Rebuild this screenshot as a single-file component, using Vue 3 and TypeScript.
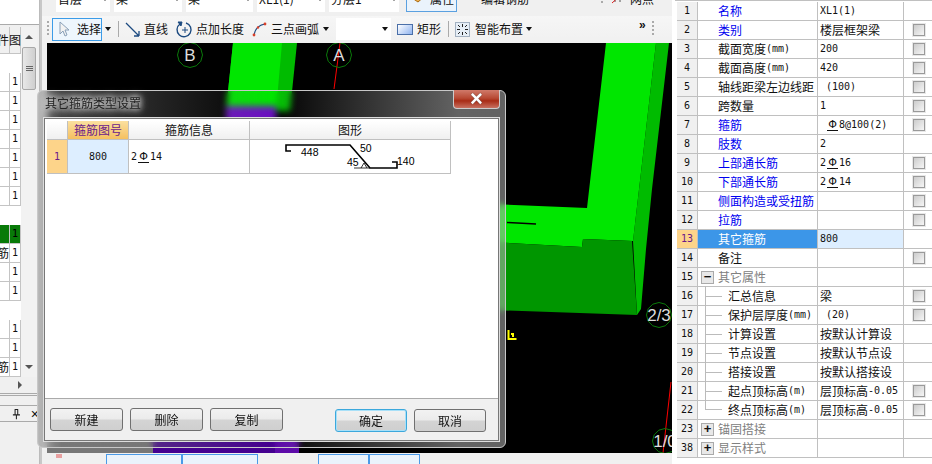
<template>
  <div class="app">
    <aside class="side">
      <div class="side__top" />
      <div class="side__grid">
        <div class="side__body">
          <div class="side__head">
            <span class="side__name">件</span>
            <span class="side__mark">图</span>
          </div>
          <div
            v-for="(row, i) in sideRows"
            :key="i"
            class="side__row"
            :class="{ 'side__row--blank': row.blank, 'side__row--on': row.on }"
          >
            <span class="side__name">{{ row.name }}</span>
            <span class="side__mark">{{ row.blank ? '' : '1' }}</span>
          </div>
        </div>
        <div class="vscroll">
          <span class="vscroll__up" />
          <span class="vscroll__thumb"><i /><i /><i /></span>
          <span class="vscroll__down" />
        </div>
      </div>
      <div class="side__hbar"><span class="side__right" /></div>
      <div class="side__pane">
        <svg width="10" height="12" viewBox="0 0 10 12"><path d="M3 1h4M3.5 1v6M6.5 1v6M1 7h8M5 7v5" fill="none" stroke="#222" stroke-width="1.2" /></svg>
        <span class="side__close">×</span>
      </div>
    </aside>

    <main class="mid">
      <div class="strip">
        <div v-for="c in combos" :key="c.text" class="combo" :style="{ width: c.width + 'px' }">
          <span>{{ c.text }}</span><b class="caret" />
        </div>
        <div class="prop-btn">
          <svg width="15" height="12" viewBox="0 0 15 12"><path d="M1 5 8 0l6 3-7 6z" fill="#f0b050" stroke="#a86a10" /></svg>
          <span>属性</span>
        </div>
        <div class="strip__item">
          <svg width="16" height="12" viewBox="0 0 16 12"><path d="M1 2h12M3 5h13" fill="none" stroke="#333" /></svg>
          <span>编辑钢筋</span>
        </div>
        <div class="strip__item strip__item--end">
          <i class="grip grip--short" />
          <svg width="16" height="12" viewBox="0 0 16 12"><path d="M0 2h15M0 6h15M5 0v9M10 0v9" fill="none" stroke="#555" /><path d="M2 10 13 0" stroke="#d22" /></svg>
          <span>网点</span>
        </div>
      </div>

      <div class="tools">
        <i class="grip" />
        <button type="button" class="tool-select">
          <svg width="13" height="17" viewBox="0 0 13 17"><path d="M2 1v12l3-3 2 5 2-1-2-5h4z" fill="#f2f2f2" stroke="#8aa0b8" /></svg>
          <span>选择</span>
        </button>
        <b class="caret caret--select" />
        <i class="sep" />
        <svg class="ico ico--line" width="15" height="15" viewBox="0 0 15 15"><path d="M1 1l13 13M14 14V9M14 14H9" fill="none" stroke="#1c4a80" stroke-width="1.3" /></svg>
        <span class="tool">直线</span>
        <svg class="ico ico--len" width="17" height="17" viewBox="0 0 17 17"><path d="M4 3A7 7 0 1 0 10 2" fill="none" stroke="#1c4a80" stroke-width="1.4" /><path d="M2 1l4 0-1 4zM6 9h6M9 6v6" fill="#1c4a80" stroke="#1c4a80" /></svg>
        <span class="tool">点加长度</span>
        <svg class="ico ico--arc" width="15" height="15" viewBox="0 0 15 15"><path d="M2 13C3 7 7 3 13 2" fill="none" stroke="#1c4a80" stroke-width="1.2" /><circle cx="2" cy="13" r="1.4" fill="#d8402a" /><circle cx="6" cy="5.5" r="1.2" fill="#d8402a" /><circle cx="13" cy="2" r="1.4" fill="#d8402a" /></svg>
        <span class="tool">三点画弧</span>
        <b class="caret caret--arc" />
        <div class="tool-combo"><b class="caret" /></div>
        <span class="rect-ico" />
        <span class="tool">矩形</span>
        <i class="sep sep--rect" />
        <svg class="ico ico--smart" width="15" height="15" viewBox="0 0 15 15"><rect x=".5" y=".5" width="14" height="14" fill="#e6eef6" stroke="#58708c" stroke-dasharray="1 1" /><path d="M7.5 2v3M7.5 10v3M2 7.5h3M10 7.5h3M3 3l2 2M12 3l-2 2M3 12l2-2M12 12l-2-2" stroke="#222" /></svg>
        <span class="tool">智能布置</span>
        <b class="caret caret--smart" />
        <span class="more">»</span>
        <i class="grip grip--end" />
      </div>

      <div class="canvas">
        <svg width="625" height="410" viewBox="47 44 625 410">
          <rect x="47" y="44" width="625" height="410" fill="#000" />
          <polygon points="233,44 297,44 290,112 226,112" fill="#00bb00" />
          <polygon points="233,44 282,44 276,112 226,112" fill="#00e600" />
          <rect x="226" y="107" width="50" height="18" fill="#6a10c0" />
          <rect x="47" y="428" width="106" height="26" fill="#777" />
          <rect x="153" y="428" width="122" height="26" fill="#44008f" />
          <rect x="275" y="428" width="24" height="26" fill="#5c0aa8" />
          <polygon points="656,44 669,44 652,190 646,250 641,310 637,316 633,242" fill="#00bb00" />
          <polygon points="606,44 656,44 633,242 583,240 582,248 490,243 490,205 587,209" fill="#00e600" />
          <polygon points="490,243 582,248 583,240 632,242 637,316 490,311" fill="#009600" />
          <path d="M507 223.5 536 225" stroke="#000" stroke-width="1.4" />
          <path d="M508.500 331v9h8M511 335h2v3" fill="none" stroke="#ff0" stroke-width="2" />
          <path d="M340 44 334 90M671 383 663 454" stroke="#f00" stroke-width="1" />
          <g v-for="a in axes" :key="a.text">
            <polygon :points="hex(a.x, a.y)" fill="none" stroke="#0a7a0a" />
            <text :x="a.x" :y="a.y + 6" class="axis" text-anchor="middle">{{ a.text }}</text>
          </g>
        </svg>
      </div>

      <div class="bottom">
        <span class="bottom__dot" />
        <span class="bottom__cell bottom__cell--a" />
        <span class="bottom__cell" />
        <span class="bottom__gap" />
        <span class="bottom__cell bottom__cell--b" />
        <span class="bottom__cell bottom__cell--c" />
      </div>
    </main>

    <section class="props">
      <div
        v-for="row in props"
        :key="row.no"
        class="prop"
        :class="{ 'prop--on': row.no === 13 }"
      >
        <span class="prop__no">{{ row.no }}</span>
        <span
          class="prop__label"
          :class="{ 'prop__label--blue': row.blue, 'prop__label--group': row.tree, 'prop__label--sub': row.sub, 'prop__label--last': row.no === 22 }"
        >
          <span v-if="row.tree" class="tree-btn">{{ row.tree }}</span>
          <Rich :text="row.label" />
        </span>
        <span class="prop__value"><Rich :text="row.value ?? ''" /></span>
        <span class="prop__check"><i v-if="row.check" class="box" /></span>
      </div>
    </section>

    <div class="dialog">
      <div class="dialog__title">
        <span>其它箍筋类型设置</span>
        <span class="dialog__close"><b>×</b></span>
      </div>
      <div class="dialog__inner">
        <div class="table">
          <div class="table__row table__row--head">
            <span class="cell cell--no" />
            <span class="cell cell--code cell--sel">箍筋图号</span>
            <span class="cell cell--info">箍筋信息</span>
            <span class="cell cell--shape">图形</span>
          </div>
          <div class="table__row table__row--data">
            <span class="cell cell--no cell--mark"><Rich text="1" /></span>
            <span class="cell cell--code cell--active"><Rich text="800" /></span>
            <span class="cell cell--info cell--left"><Rich text="2Φ14" /></span>
            <span class="cell cell--shape">
              <svg width="200" height="33" viewBox="250 140 200 33">
                <path d="M291 151h-5v-6h64l20 23h27v-6h-5" fill="none" stroke="#000" stroke-width="1.6" />
                <path d="M354 168h16M361 168l3-5 3 5" fill="none" stroke="#000" stroke-width=".8" />
                <text x="301" y="156" class="dim">448</text>
                <text x="360" y="152" class="dim">50</text>
                <text x="347" y="166" class="dim">45</text>
                <text x="397" y="165" class="dim">140</text>
              </svg>
            </span>
          </div>
        </div>
        <div class="dialog__foot">
          <button v-for="b in leftButtons" :key="b" type="button" class="btn">{{ b }}</button>
          <button type="button" class="btn btn--right btn--main">确定</button>
          <button type="button" class="btn btn--low">取消</button>
        </div>
      </div>
    </div>
  </div>
</template>

<script setup lang="ts">
import { h } from 'vue'

interface PropRow {
  no: number
  label: string
  value?: string
  blue?: boolean
  check?: boolean
  sub?: boolean
  tree?: string
}

// latin runs are half width in the original, so they get their own font size
const Rich = (p: { text: string }) =>
  (p.text.match(/[\x20-\x7e]+|Φ|[^\x20-\x7eΦ]+/g) ?? []).map((part) =>
    h('span', { class: part === 'Φ' ? 'steel' : /^[\x20-\x7e]/.test(part) ? 'latin' : 'cjk' }, part),
  )
Rich.props = ['text']

const combos = [
  { text: '首层', width: 54 },
  { text: '梁', width: 68 },
  { text: '梁', width: 67 },
  { text: 'XL1(1)', width: 68 },
  { text: '分层1', width: 70 },
]

const leftButtons = ['新建', '删除', '复制']

const blank = { name: '', blank: true }
const plain = { name: '' }
const sideRows: { name: string; blank?: boolean; on?: boolean }[] = [
  blank,
  ...Array(7).fill(plain),
  blank,
  { name: '', on: true },
  { name: '筋' },
  plain,
  plain,
  blank,
  plain,
  plain,
  { name: '筋' },
]

const axes = [
  { text: 'B', x: 190, y: 56 },
  { text: 'A', x: 339, y: 56 },
  { text: '2/3', x: 659, y: 316 },
  { text: '1/0', x: 665, y: 442 },
]

function hex(x: number, y: number) {
  return Array.from({ length: 12 }, (_, i) => {
    const a = (i * Math.PI) / 6
    return `${x + 12.5 * Math.cos(a)},${y + 12.5 * Math.sin(a)}`
  }).join(' ')
}

const props: PropRow[] = [
  { no: 1, label: '名称', value: 'XL1(1)', blue: true },
  { no: 2, label: '类别', value: '楼层框架梁', blue: true, check: true },
  { no: 3, label: '截面宽度(mm)', value: '200', check: true },
  { no: 4, label: '截面高度(mm)', value: '420', check: true },
  { no: 5, label: '轴线距梁左边线距', value: ' (100)', check: true },
  { no: 6, label: '跨数量', value: '1', check: true },
  { no: 7, label: '箍筋', value: ' Φ8@100(2)', blue: true, check: true },
  { no: 8, label: '肢数', value: '2', blue: true },
  { no: 9, label: '上部通长筋', value: '2Φ16', blue: true, check: true },
  { no: 10, label: '下部通长筋', value: '2Φ14', blue: true, check: true },
  { no: 11, label: '侧面构造或受扭筋', blue: true, check: true },
  { no: 12, label: '拉筋', blue: true, check: true },
  { no: 13, label: '其它箍筋', value: '800' },
  { no: 14, label: '备注', check: true },
  { no: 15, label: '其它属性', tree: '−' },
  { no: 16, label: '汇总信息', value: '梁', sub: true, check: true },
  { no: 17, label: '保护层厚度(mm)', value: ' (20)', sub: true, check: true },
  { no: 18, label: '计算设置', value: '按默认计算设', sub: true },
  { no: 19, label: '节点设置', value: '按默认节点设', sub: true },
  { no: 20, label: '搭接设置', value: '按默认搭接设', sub: true },
  { no: 21, label: '起点顶标高(m)', value: '层顶标高-0.05', sub: true, check: true },
  { no: 22, label: '终点顶标高(m)', value: '层顶标高-0.05', sub: true, check: true },
  { no: 23, label: '锚固搭接', tree: '+' },
  { no: 38, label: '显示样式', tree: '+' },
]
</script>

<style>
html,
body {
  margin: 0;
  background: #fff;
}
</style>

<style scoped>
.app {
  position: relative;
  display: flex;
  width: 932px;
  height: 464px;
  overflow: hidden;
  background: #fff;
  color: #111;
  font-family: 'Noto Sans CJK SC', 'Liberation Sans', sans-serif;
  font-size: 12px;
  line-height: 16px;
}

:deep(.latin) {
  font-family: 'DejaVu Sans Mono', monospace;
  font-size: 10px;
  white-space: pre;
}

:deep(.steel) {
  display: inline-block;
  width: 11px;
  height: 11px;
  margin: 0 1px;
  border-bottom: 1px solid currentColor;
  font-family: 'DejaVu Sans', sans-serif;
  font-size: 11px;
  line-height: 11px;
  text-align: center;
}

/* left tree panel */
.side {
  display: flex;
  flex-direction: column;
  flex: none;
  width: 40px;
  border-right: 1px solid #bbb;
  box-sizing: border-box;
  background: #f0f0f0;
}

.side__top {
  height: 24px;
  border-bottom: 1px solid #aaa;
  background: #fff;
}

.side__grid {
  display: flex;
  height: 350px;
  margin-top: 2px;
}

.side__body {
  width: 21px;
  height: 350px;
  overflow: hidden;
  background: #fff;
}

.side__head,
.side__row {
  display: flex;
  height: 19px;
  box-sizing: border-box;
  border-bottom: 1px solid #c4c4c4;
}

.side__head {
  height: 27px;
  background: #f0f0f0;
}

.side__name,
.side__mark {
  display: flex;
  justify-content: flex-end;
  align-items: center;
  overflow: hidden;
  border-right: 1px solid #c4c4c4;
  box-sizing: border-box;
}

.side__name {
  width: 10px;
  white-space: nowrap;
}

.side__mark {
  width: 11px;
  justify-content: center;
  font-family: 'DejaVu Sans Mono', monospace;
  font-size: 10px;
}

.side__row--blank {
  border-bottom: 0;
}

.side__row--blank span {
  border: 0;
}

.side__row--on span {
  background: #087a08;
  color: #000;
}

.side__head .side__mark {
  font-family: inherit;
  font-size: 12px;
  overflow: visible;
}

.vscroll {
  display: flex;
  flex-direction: column;
  align-items: center;
  width: 16px;
  background: #f2f2f2;
}

.vscroll__up,
.vscroll__down {
  width: 0;
  margin: 8px 0;
  border: 4px solid transparent;
  border-top: 0;
  border-bottom: 4px solid #555;
}

.vscroll__down {
  margin-top: auto;
  border-top: 4px solid #555;
  border-bottom: 0;
}

.vscroll__thumb {
  display: flex;
  flex-direction: column;
  justify-content: center;
  align-items: center;
  gap: 1px;
  width: 14px;
  height: 43px;
  box-sizing: border-box;
  border: 1px solid #a8a8a8;
  border-radius: 2px;
  background: linear-gradient(90deg, #e8e8e8, #cfcfcf);
}

.vscroll__thumb i {
  width: 7px;
  height: 1px;
  background: #666;
}

.side__hbar {
  display: flex;
  justify-content: flex-end;
  align-items: center;
  height: 16px;
  padding-right: 17px;
  border-bottom: 3px double #aaa;
}

.side__right {
  border: 4px solid transparent;
  border-left: 4px solid #555;
  border-right: 0;
}

.side__pane {
  display: flex;
  align-items: center;
  gap: 10px;
  height: 15px;
  margin-top: 9px;
  padding-left: 12px;
  border-top: 1px solid #aaa;
  border-bottom: 1px solid #aaa;
}

.side__close {
  font-family: 'Liberation Sans', sans-serif;
  font-size: 14px;
}

/* middle column */
.mid {
  display: flex;
  flex-direction: column;
  flex: none;
  width: 632px;
  border-left: 2px solid #c8c8c8;
  box-sizing: border-box;
  background: #f0f0f0;
}

.strip {
  display: flex;
  align-items: flex-end;
  gap: 4px;
  height: 12px;
  padding-left: 14px;
  overflow: hidden;
}

.combo {
  display: flex;
  flex: none;
  justify-content: space-between;
  align-items: center;
  height: 26px;
  padding: 0 2px;
  box-sizing: border-box;
  background: #fff;
}

.prop-btn,
.strip__item {
  display: flex;
  flex: none;
  align-items: center;
  gap: 4px;
  height: 26px;
}

.prop-btn {
  width: 51px;
  margin-left: 3px;
  padding-left: 4px;
  box-sizing: border-box;
  border: 1px solid #5aa0e0;
  background: #eaf3fc;
}

.strip__item--end {
  margin-left: 68px;
}

.caret {
  display: inline-block;
  flex: none;
  width: 0;
  border: 3px solid transparent;
  border-top: 4px solid #111;
  border-bottom: 0;
}

.tools {
  display: flex;
  align-items: center;
  height: 28px;
  margin-top: 4px;
  padding-left: 5px;
  background: linear-gradient(#f6f6f6, #f0f0f0);
}

.grip {
  flex: none;
  width: 2px;
  height: 16px;
  background: repeating-linear-gradient(#aaa 0 2px, transparent 2px 4px);
}

.grip--short {
  margin-right: 3px;
  height: 12px;
}

.grip--end {
  margin-left: 6px;
}

.tool-select {
  display: flex;
  align-items: center;
  gap: 6px;
  width: 50px;
  height: 23px;
  margin: 0 0 0 3px;
  padding: 0 0 0 5px;
  border: 1px solid #3c9ce8;
  background: #eef6fd;
  color: inherit;
  font: inherit;
}

.caret--select {
  margin-left: 3px;
}

.sep {
  flex: none;
  width: 1px;
  height: 16px;
  margin-left: 7px;
  background: #aaa;
}

.tool {
  flex: none;
  white-space: nowrap;
}

.ico {
  flex: none;
}

.ico--line {
  margin: 0 4px 0 6px;
}

.ico--len {
  margin: 0 3px 0 8px;
}

.ico--arc {
  margin: 0 4px 0 8px;
}

.caret--arc {
  margin-left: 4px;
}

.tool-combo {
  display: flex;
  flex: none;
  justify-content: flex-end;
  align-items: center;
  width: 55px;
  height: 22px;
  margin-left: 7px;
  padding-right: 3px;
  box-sizing: border-box;
  background: #fff;
}

.rect-ico {
  flex: none;
  width: 14px;
  height: 9px;
  margin: 0 4px 0 6px;
  border: 1px solid #4a6fa8;
  background: linear-gradient(135deg, #fff, #90b4f0);
}

.ico--smart {
  margin: 0 5px 0 6px;
}

.caret--smart {
  margin-left: 3px;
}

.more {
  flex: none;
  margin: -8px 0 0 107px;
  font-family: 'Liberation Sans', sans-serif;
  font-weight: 700;
}

.canvas {
  flex: none;
  height: 410px;
  padding-left: 5px;
}

.canvas svg {
  display: block;
}

.axis {
  fill: #ddd;
  font-family: 'Liberation Sans', sans-serif;
  font-size: 17px;
}

.bottom {
  display: flex;
  align-items: flex-start;
  height: 10px;
  padding: 1px 0 0 14px;
}

.bottom__dot {
  width: 6px;
  height: 4px;
  margin-right: 44px;
  background: #e8a0a0;
}

.bottom__cell {
  width: 74px;
  height: 9px;
  border: 1px solid #4a9ae8;
  border-bottom: 0;
  background: #eaf3fc;
}

.bottom__gap {
  width: 60px;
}

.bottom__cell--b,
.bottom__cell--c {
  width: 49px;
}

/* property grid */
.props {
  flex: none;
  width: 257px;
  margin-left: 3px;
  padding: 1px 0 0 2px;
  box-sizing: border-box;
  border-top: 1px solid #c0c0c0;
}

.prop {
  display: flex;
  height: 19px;
  box-sizing: border-box;
  border-bottom: 1px solid #c0c0c0;
}

.prop__no {
  display: flex;
  justify-content: center;
  align-items: center;
  width: 21px;
  box-sizing: border-box;
  border-right: 1px solid #c0c0c0;
  background: #f0f0f0;
  font-family: 'DejaVu Sans Mono', monospace;
  font-size: 10px;
}

.prop__label {
  position: relative;
  display: flex;
  align-items: center;
  width: 120px;
  padding-left: 20px;
  box-sizing: border-box;
  border-right: 1px solid #c0c0c0;
  white-space: nowrap;
}

.prop__label--blue {
  color: #0000f0;
}

.prop__label--group {
  color: #808080;
}

.prop__label--sub {
  padding-left: 30px;
}

.prop__label--sub::before {
  content: '';
  position: absolute;
  left: 7px;
  top: -1px;
  bottom: -1px;
  width: 17px;
  background:
    linear-gradient(#bbb, #bbb) 0 0 / 1px 100% no-repeat,
    linear-gradient(#bbb, #bbb) 0 50% / 100% 1px no-repeat;
}

.prop__label--last::before {
  bottom: 9px;
  background:
    linear-gradient(#bbb, #bbb) 0 0 / 1px 100% no-repeat,
    linear-gradient(#bbb, #bbb) 0 100% / 100% 1px no-repeat;
}

.tree-btn {
  position: absolute;
  left: 3px;
  top: 3px;
  width: 11px;
  height: 11px;
  border: 1px solid #aaa;
  background: #e8e8e8;
  color: #111;
  font-family: 'Liberation Sans', sans-serif;
  font-size: 13px;
  font-weight: 700;
  line-height: 10px;
  text-align: center;
}

.prop__value {
  display: flex;
  align-items: center;
  width: 86px;
  padding-left: 2px;
  overflow: hidden;
  box-sizing: border-box;
  border-right: 1px solid #c0c0c0;
  white-space: nowrap;
}

.prop__check {
  display: flex;
  flex: 1;
  align-items: center;
  padding-left: 9px;
}

.box {
  width: 12px;
  height: 12px;
  box-sizing: border-box;
  border: 1px solid #9a9a9a;
  outline: 1px solid #e8e8e8;
  background: linear-gradient(135deg, #ccc, #f6f6f6);
}

.prop--on .prop__no {
  background: #fdd48a;
  color: #6a1b8a;
}

.prop--on .prop__label {
  background: #3c96e8;
  color: #fff;
}

.prop--on .prop__value {
  background: #ddeeff;
}

/* dialog floats over the drawing, frame is aero glass */
.dialog {
  position: absolute;
  left: 37px;
  top: 90px;
  display: flex;
  flex-direction: column;
  width: 469px;
  height: 358px;
  box-sizing: border-box;
  padding: 0 6px 6px;
  border: 1px solid #c8c8c8;
  border-radius: 6px;
  background: linear-gradient(90deg, rgba(170, 170, 170, 0.75), rgba(120, 120, 120, 0.55) 5%, rgba(80, 80, 80, 0) 50%, rgba(180, 180, 180, 0.55) 90%);
  backdrop-filter: blur(3px);
}

.dialog__title {
  position: relative;
  display: flex;
  flex: none;
  align-items: center;
  height: 27px;
  padding: 0 0 3px 1px;
  box-sizing: border-box;
  color: #222;
  text-shadow: 0 0 6px #ddd, 0 0 6px #ddd, 0 0 10px #ddd;
}

.dialog__close {
  position: absolute;
  right: -1px;
  top: -1px;
  display: flex;
  justify-content: center;
  align-items: center;
  width: 47px;
  height: 19px;
  box-sizing: border-box;
  border: 1px solid #ccc;
  border-top: 0;
  border-radius: 0 0 4px 4px;
  background: linear-gradient(#d07a6a, #b84a34 45%, #a82c16 60%, #c87060);
  color: #fff;
  font-family: 'Liberation Sans', sans-serif;
  font-size: 22px;
  text-shadow: 0 0 1px #333;
}

.dialog__inner {
  display: flex;
  flex: 1;
  flex-direction: column;
  border: 1px solid #777;
  outline: 1px solid #ddd;
  background: #f0f0f0;
}

.table {
  flex: 1;
  padding: 2px;
  border-bottom: 1px solid #aaa;
  background: #fff;
}

.table__row {
  display: flex;
  width: 404px;
  box-sizing: border-box;
  border-bottom: 1px solid #c0c0c0;
}

.table__row--head {
  height: 19px;
  background: linear-gradient(#fff, #f0f0f0);
}

.table__row--data {
  height: 34px;
}

.cell {
  display: flex;
  justify-content: center;
  align-items: center;
  flex: none;
  box-sizing: border-box;
  border-right: 1px solid #c0c0c0;
}

.cell--no {
  width: 21px;
}

.cell--code {
  width: 61px;
}

.cell--info {
  width: 121px;
}

.cell--shape {
  width: 201px;
}

.cell--sel {
  background: linear-gradient(#fbe0a0, #f5c060);
  color: #6a1b8a;
}

.cell--mark {
  background: #fdd48a;
  color: #6a1b8a;
}

.cell--active {
  background: #ddeeff;
}

.cell--left {
  justify-content: flex-start;
  padding-left: 2px;
}

.dim {
  fill: #000;
  font-family: 'Liberation Sans', sans-serif;
  font-size: 10.5px;
}

.dialog__foot {
  display: flex;
  flex: none;
  gap: 7px;
  height: 41px;
  padding: 9px 0 0 5px;
  box-sizing: border-box;
}

.btn {
  width: 73px;
  height: 23px;
  padding: 0;
  border: 1px solid #707070;
  border-radius: 3px;
  background: linear-gradient(#f2f2f2, #ebebeb 48%, #d4d4d4 52%, #cfcfcf);
  color: #111;
  font: inherit;
}

.btn--right {
  margin-left: 45px;
}

.btn--main,
.btn--low {
  width: 72px;
  margin-top: 1px;
}

.btn--main {
  border-color: #3ca8dc;
  box-shadow: inset 0 0 0 1px #a8e0f8;
}
</style>
